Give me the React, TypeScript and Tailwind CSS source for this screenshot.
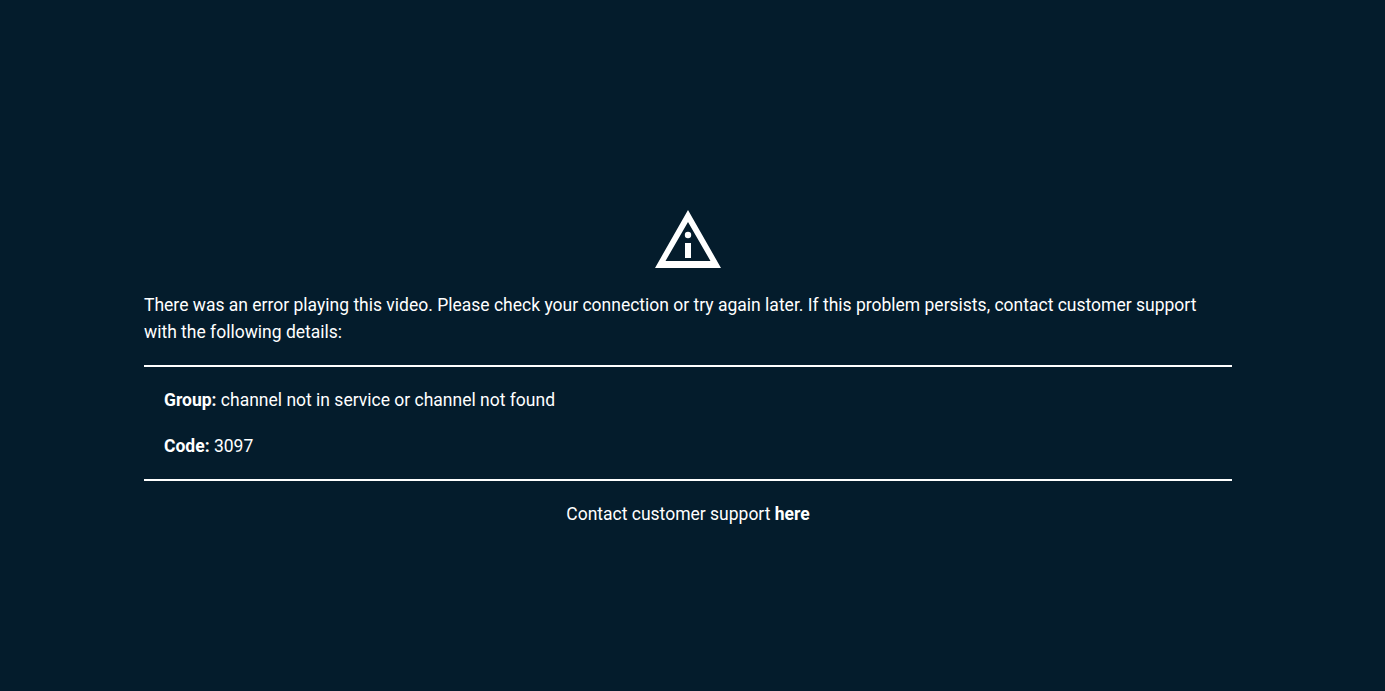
export default function App() {
  return (
    <div className="flex h-[691px] justify-center bg-[#041c2c] pt-[210px] pr-[9px] font-['Roboto',sans-serif] text-[17.5px] leading-[27px] text-white">
      <div className="w-[1088px]">
        <div className="flex justify-center">
          <svg width="66" height="58" viewBox="0 0 66 58" className="block">
            <path d="M33 0 L66 58 H0 Z M33 12 L10.5 51 H55.5 Z" fill="#fff" fillRule="evenodd" />
            <circle cx="33" cy="25" r="3.2" fill="#fff" />
            <rect x="30" y="33" width="6" height="15" fill="#fff" />
          </svg>
        </div>
        <p className="mt-6">
          There was an error playing this video. Please check your connection or try again later. If this problem persists, contact customer support with the following details:
        </p>
        <div className="mt-[19px] border-y-2 border-white px-5 pt-5 pb-[19px]">
          <p><b>Group:</b> channel not in service or channel not found</p>
          <p className="mt-[19px]"><b>Code:</b> 3097</p>
        </div>
        <p className="mt-5 text-center">Contact customer support <b>here</b></p>
      </div>
    </div>
  );
}
